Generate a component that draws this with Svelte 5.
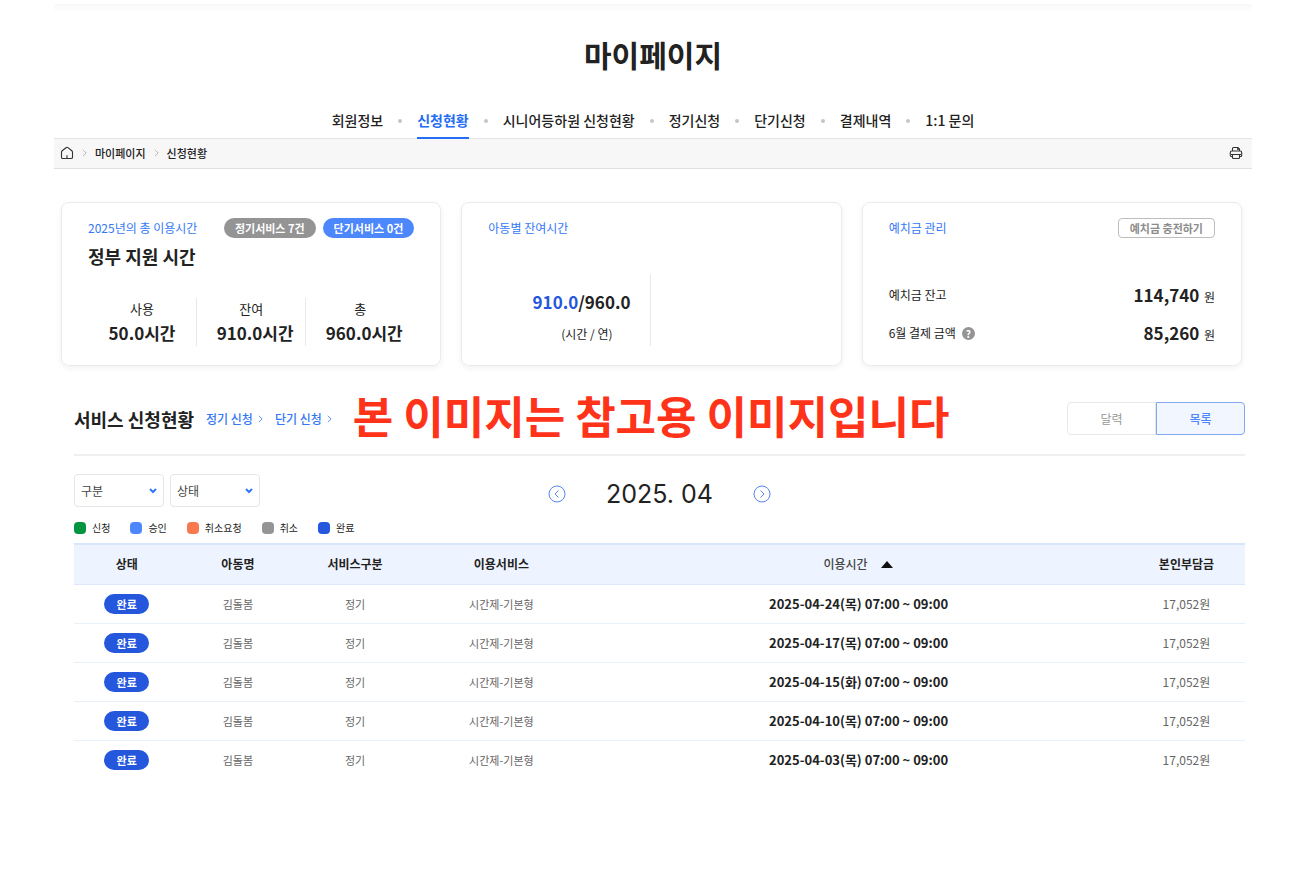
<script>
  const menu = ["회원정보", "신청현황", "시니어등하원 신청현황", "정기신청", "단기신청", "결제내역", "1:1 문의"];
  const current = "신청현황";

  const times = [
    { label: "사용", value: "50.0시간" },
    { label: "잔여", value: "910.0시간" },
    { label: "총", value: "960.0시간" }
  ];

  const legend = [
    { name: "신청", cls: "apply" },
    { name: "승인", cls: "approve" },
    { name: "취소요청", cls: "request" },
    { name: "취소", cls: "cancel" },
    { name: "완료", cls: "done" }
  ];

  const dates = ["2025-04-24(목)", "2025-04-17(목)", "2025-04-15(화)", "2025-04-10(목)", "2025-04-03(목)"];
  const rows = dates.map((date) => ({
    status: "완료",
    child: "김돌봄",
    type: "정기",
    service: "시간제-기본형",
    time: `${date} 07:00 ~ 09:00`,
    price: "17,052원"
  }));

  let year = $state(2025);
  let month = $state(4);
  let view = $state("list");

  function move(step) {
    month += step;
    if (month < 1) {
      month = 12;
      year--;
    } else if (month > 12) {
      month = 1;
      year++;
    }
  }
</script>

{#snippet chevron()}
  <svg class="chevron" viewBox="0 0 6 10" aria-hidden="true"><path d="M1 1l4 4-4 4" /></svg>
{/snippet}

<div class="page">
  <header>
    <h1>마이페이지</h1>
    <nav class="menu" aria-label="마이페이지 메뉴">
      {#each menu as item, i}
        {#if i > 0}<span class="dot"></span>{/if}
        <a href="#menu{i}" class:active={item === current}>{item}</a>
      {/each}
    </nav>
  </header>

  <div class="crumbs">
    <a href="#home" aria-label="홈">
      <svg class="icon" viewBox="0 0 14 14" aria-hidden="true">
        <path d="M1.500 6.200c0-.6.2-1 .7-1.400L6 1.700c.6-.5 1.400-.5 2 0l3.800 3.100c.5.4.7.8.7 1.400v5c0 .8-.5 1.300-1.300 1.300H2.800c-.8 0-1.300-.5-1.300-1.300z" />
        <path d="M7 9.200v3" />
      </svg>
    </a>
    {@render chevron()}
    <a href="#mypage">마이페이지</a>
    {@render chevron()}
    <a href="#status">신청현황</a>
    <button class="print" aria-label="인쇄">
      <svg class="icon" viewBox="0 0 14 14" aria-hidden="true">
        <path d="M3.500 5V2.500c0-.6.3-1 1-1h4.300L10.500 3v2M3.500 10.500H2.300c-.6 0-1-.4-1-1V6.600C1.300 5.600 1.900 5 2.900 5h8.200c1 0 1.600.6 1.600 1.600v2.900c0 .6-.4 1-1 1h-1.200M3.500 8.500h7v3c0 .6-.4 1-1 1h-5c-.6 0-1-.4-1-1zM2 8.500h10M8.600 1.600v1.600h1.700" />
      </svg>
    </button>
  </div>

  <section class="cards">
    <article class="card">
      <div class="card-head">
        <p class="label">2025년의 총 이용시간</p>
        <div class="pills">
          <span class="pill gray">정기서비스 7건</span>
          <span class="pill">단기서비스 0건</span>
        </div>
      </div>
      <h2>정부 지원 시간</h2>
      <dl class="times">
        {#each times as time}
          <div>
            <dt>{time.label}</dt>
            <dd>{time.value}</dd>
          </div>
        {/each}
      </dl>
    </article>

    <article class="card">
      <div class="card-head">
        <p class="label">아동별 잔여시간</p>
      </div>
      <div class="remain">
        <p class="hours"><em>910.0</em>/960.0</p>
        <p class="unit">(시간 / 연)</p>
      </div>
    </article>

    <article class="card">
      <div class="card-head">
        <p class="label">예치금 관리</p>
        <button class="charge">예치금 충전하기</button>
      </div>
      <dl class="deposit">
        <div>
          <dt>예치금 잔고</dt>
          <dd><strong>114,740</strong> 원</dd>
        </div>
        <div>
          <dt>6월 결제 금액 <button class="help" aria-label="도움말">?</button></dt>
          <dd><strong>85,260</strong> 원</dd>
        </div>
      </dl>
    </article>
  </section>

  <section class="status">
    <div class="status-head">
      <h2>서비스 신청현황</h2>
      <a href="#regular">정기 신청 {@render chevron()}</a>
      <a href="#short">단기 신청 {@render chevron()}</a>
      <p class="notice">본 이미지는 참고용 이미지입니다</p>
      <div class="toggle">
        <button class:on={view === "calendar"} onclick={() => (view = "calendar")}>달력</button>
        <button class:on={view === "list"} onclick={() => (view = "list")}>목록</button>
      </div>
    </div>

    <div class="filters">
      <div class="selects">
        <span class="select">
          <select aria-label="구분"><option>구분</option></select>
          <svg viewBox="0 0 8 6" aria-hidden="true"><path d="M1 1l3 3 3-3" /></svg>
        </span>
        <span class="select">
          <select aria-label="상태"><option>상태</option></select>
          <svg viewBox="0 0 8 6" aria-hidden="true"><path d="M1 1l3 3 3-3" /></svg>
        </span>
      </div>
      <div class="month">
        <button aria-label="이전 달" onclick={() => move(-1)}>
          <svg viewBox="0 0 18 18" aria-hidden="true"><circle cx="9" cy="9" r="8" /><path d="M10.500 5.500L7 9l3.500 3.500" /></svg>
        </button>
        <span>{year}. {String(month).padStart(2, "0")}</span>
        <button aria-label="다음 달" onclick={() => move(1)}>
          <svg viewBox="0 0 18 18" aria-hidden="true"><circle cx="9" cy="9" r="8" /><path d="M7.500 5.500L11 9l-3.500 3.500" /></svg>
        </button>
      </div>
    </div>

    <ul class="legend">
      {#each legend as item}
        <li><i class={item.cls}></i>{item.name}</li>
      {/each}
    </ul>

    <table>
      <thead>
        <tr>
          <th class="w9">상태</th>
          <th class="w10">아동명</th>
          <th class="w10">서비스구분</th>
          <th class="w15">이용서비스</th>
          <th class="sort">
            <button>이용시간 <svg viewBox="0 0 12 7" aria-hidden="true"><path d="M0 7l6-7 6 7z" /></svg></button>
          </th>
          <th class="w10">본인부담금</th>
        </tr>
      </thead>
      <tbody>
        {#each rows as row}
          <tr>
            <td><span class="badge">{row.status}</span></td>
            <td>{row.child}</td>
            <td>{row.type}</td>
            <td>{row.service}</td>
            <td class="time">{row.time}</td>
            <td class="price">{row.price}</td>
          </tr>
        {/each}
      </tbody>
    </table>
  </section>
</div>

<style>
:global(body) {
  background: #fff;
}

.page {
  margin: 0 59px 0 54px;
  padding-top: 4px;
  font-family: "Noto Sans CJK KR", sans-serif;
  font-size: 12px;
  line-height: 20px;
  color: #222;
}

.page * {
  box-sizing: border-box;
}

h1, h2, p, dl, dd, ul {
  margin: 0;
  padding: 0;
}

a {
  color: inherit;
  text-decoration: none;
}

button, select {
  font: inherit;
  color: inherit;
  background: none;
  border: 0;
  padding: 0;
  cursor: pointer;
}

svg {
  display: block;
  fill: none;
  stroke: currentColor;
}

header {
  padding-top: 28px;
  background: linear-gradient(#f8f8f8, #fff 8px);
}

h1 {
  font-size: 30px;
  line-height: 44px;
  text-align: center;
}

.menu {
  display: flex;
  justify-content: center;
  align-items: center;
  gap: 15px;
  padding-top: 27px;
  font-size: 14px;
  font-weight: 500;
}

.menu a {
  height: 36px;
  line-height: 34px;
  margin-bottom: -1px;
}

.menu a.active {
  color: #256ef4;
  font-weight: 700;
  border-bottom: 2px solid #256ef4;
}

.dot {
  width: 4px;
  height: 4px;
  border-radius: 50%;
  background: #c6c6c6;
}

.crumbs {
  display: flex;
  align-items: center;
  gap: 8px;
  height: 31px;
  padding: 0 9px 2px 6px;
  background: #f7f7f7;
  border-top: 1px solid #e4e4e4;
  border-bottom: 1px solid #e0e0e0;
  font-size: 11px;
  font-weight: 500;
}

.icon {
  width: 14px;
  height: 14px;
  stroke: #333;
  stroke-width: 1.1;
}

.chevron {
  width: 5px;
  height: 8px;
}

.crumbs .chevron {
  stroke: #aaa;
}

.print {
  margin-left: auto;
}

.cards {
  display: grid;
  grid-template-columns: repeat(3, 1fr);
  gap: 20px;
  padding: 33px 10px 0 7px;
}

.card {
  height: 164px;
  padding: 15px 26px;
  border: 1px solid #ebebeb;
  border-radius: 8px;
  box-shadow: 0 2px 6px rgba(0, 0, 0, 0.06);
}

.card-head {
  display: flex;
  justify-content: space-between;
  align-items: center;
}

.label {
  color: #3478f6;
}

.pills {
  display: flex;
  gap: 7px;
}

.pill {
  padding: 0 11px;
  border-radius: 10px;
  background: #4c87fb;
  color: #fff;
  font-size: 11px;
  font-weight: 700;
}

.pill.gray {
  background: #949494;
}

h2 {
  font-size: 18px;
  line-height: 36px;
}

.times {
  display: flex;
  padding-top: 24px;
}

.times div {
  flex: 1;
  height: 48px;
  text-align: center;
}

.times div + div {
  border-left: 1px solid #e8e8e8;
}

.times dt {
  font-size: 13px;
  line-height: 22px;
}

.times dd {
  font-size: 17px;
  line-height: 26px;
  font-weight: 700;
}

.times div + div dd {
  padding-left: 8px;
}

.remain {
  width: 50%;
  height: 72px;
  margin-top: 36px;
  padding-top: 14px;
  padding-right: 20px;
  border-right: 1px solid #e8e8e8;
  text-align: right;
}

.hours {
  font-size: 17px;
  line-height: 28px;
  font-weight: 700;
}

.hours em {
  color: #2457dc;
  font-style: normal;
}

.unit {
  padding: 8px 18px 0 0;
}

.charge {
  padding: 0 11px;
  border: 1px solid #bdbdbd;
  border-radius: 4px;
  color: #8c8c8c;
  font-size: 11px;
  line-height: 18px;
  font-weight: 700;
}

.deposit {
  display: grid;
  gap: 10px;
  padding-top: 44px;
}

.deposit div {
  display: flex;
  justify-content: space-between;
  align-items: center;
  height: 28px;
}

.deposit dt {
  display: flex;
  align-items: center;
  gap: 6px;
  padding-bottom: 2px;
}

.deposit strong {
  margin-right: 2px;
  font-size: 17px;
}

.help {
  width: 13px;
  height: 13px;
  border-radius: 50%;
  background: #949494;
  color: #fff;
  font-size: 10px;
  line-height: 13px;
  font-weight: 700;
}

.status {
  padding: 9px 7px 0 20px;
}

.status-head {
  display: flex;
  align-items: center;
  height: 81px;
  padding-top: 8px;
  border-bottom: 2px solid #f0f0f0;
}

.status-head a {
  display: flex;
  align-items: center;
  gap: 5px;
  margin-left: 12px;
  color: #3478f6;
  font-weight: 500;
}

.notice {
  margin-left: 21px;
  padding-bottom: 8px;
  color: #ff3319;
  font-size: 44px;
  line-height: 60px;
  font-weight: 700;
  white-space: nowrap;
}

.toggle {
  display: flex;
  margin-left: auto;
}

.toggle button {
  width: 89px;
  height: 33px;
  border: 1px solid #e8e8e8;
  color: #999;
}

.toggle button:first-child {
  border-radius: 4px 0 0 4px;
}

.toggle button:last-child {
  border-radius: 0 4px 4px 0;
}

.toggle button.on {
  background: #f2f6ff;
  border-color: #81a7ec;
  color: #4c87fb;
  font-weight: 500;
}

.filters {
  display: grid;
  grid-template-columns: 1fr auto 1fr;
  align-items: start;
  padding-top: 18px;
}

.selects {
  display: flex;
  gap: 6px;
}

.select {
  display: grid;
  align-items: center;
}

.select select,
.select svg {
  grid-area: 1 / 1;
}

.select select {
  appearance: none;
  width: 90px;
  height: 33px;
  padding: 0 6px;
  border: 1px solid #e6e6e6;
  border-radius: 4px;
  color: #444;
}

.select svg {
  justify-self: end;
  width: 8px;
  height: 6px;
  margin-right: 7px;
  stroke: #3478f6;
  stroke-width: 2;
  pointer-events: none;
}

.month {
  display: flex;
  align-items: center;
  gap: 40px;
  padding-top: 4px;
  font-family: Inter, sans-serif;
  font-size: 25px;
  line-height: 32px;
}

.month svg {
  width: 18px;
  height: 18px;
  stroke: #5b83ee;
}

.legend {
  display: flex;
  gap: 20px;
  padding: 8px 0 5px;
  list-style: none;
  font-size: 10px;
}

.legend li {
  display: flex;
  align-items: center;
  gap: 6px;
}

.legend i {
  width: 12px;
  height: 12px;
  border-radius: 4px;
}

.apply {
  background: #03943f;
}

.approve {
  background: #4c87fb;
}

.request {
  background: #f87950;
}

.cancel {
  background: #949494;
}

.done {
  background: #2457dc;
}

table {
  width: 100%;
  table-layout: fixed;
  border-collapse: collapse;
  text-align: center;
}

th {
  height: 40px;
  padding: 0;
  background: #eef4ff;
  border-top: 2px solid #d8e6fc;
  border-bottom: 1px solid #dce8fa;
}

.w9 {
  width: 9%;
}

.w10 {
  width: 10%;
}

.w15 {
  width: 15%;
}

.sort button {
  display: inline-flex;
  align-items: center;
  gap: 12px;
  color: #444;
  font-weight: 500;
}

.sort svg {
  width: 14px;
  height: 7px;
  fill: #111;
  stroke: none;
}

td {
  height: 39px;
  padding: 0;
  border-bottom: 1px solid #e8f0fb;
  color: #666;
  font-size: 11px;
}

tbody tr:last-child td {
  border-bottom: 0;
}

td.time {
  color: #222;
  font-size: 13px;
  font-weight: 700;
}

td.price {
  font-size: 12px;
}

.badge {
  display: inline-block;
  width: 45px;
  border-radius: 10px;
  background: #2457dc;
  color: #fff;
  font-weight: 700;
}
</style>
